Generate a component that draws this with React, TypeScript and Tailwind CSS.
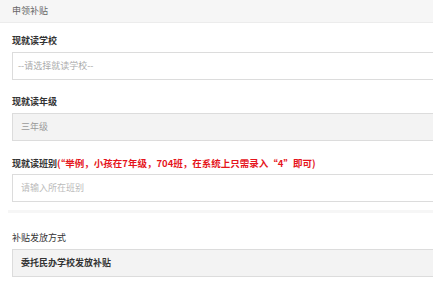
export default function App() {
  const font = { fontFamily: '"Noto Sans CJK SC", "Liberation Sans", sans-serif' };
  return (
    <div className="w-[433px] h-[288px] overflow-hidden bg-white text-[9px]" style={font}>
      {/* header */}
      <div className="h-[23px] bg-[#f6f6f6] border-b border-[#ececec] pl-3 flex items-center text-[#666] leading-none">
        <span className="-mt-[1px]">申领补贴</span>
      </div>

      <div className="pl-3 pt-[10px]">
        <div className="mb-[14px]">
          <div className="h-[16px] leading-[16px] mb-[3px] font-bold text-[#333]">现就读学校</div>
          <div className="h-[28px] w-[440px] border border-[#dcdcdc] bg-white pl-[5px] flex items-center text-[#aaa]">
            --请选择就读学校--
          </div>
        </div>

        <div className="mb-[14px]">
          <div className="h-[16px] leading-[16px] mb-[3px] font-bold text-[#333]">现就读年级</div>
          <div className="h-[28px] w-[440px] border border-[#dcdcdc] bg-[#f3f3f3] pl-[8px] flex items-center text-[#999]">
            三年级
          </div>
        </div>

        <div>
          <div className="h-[16px] leading-[16px] mb-[3px] font-bold text-[#333] whitespace-nowrap">
            现就读班别<span className="text-[#e5141b] text-[9.5px]">(“举例，小孩在7年级，704班，在系统上只需录入“4”即可)</span>
          </div>
          <div className="h-[28px] w-[440px] border border-[#dcdcdc] bg-white pl-[8px] flex items-center text-[#bbb]">
            请输入所在班别
          </div>
        </div>
      </div>

      <div className="pl-2 pt-[8px]">
        <div className="h-[3px] bg-[#f6f6f6]" />
      </div>

      <div className="pl-3 pt-[17px]">
        <div className="h-[16px] leading-[16px] mb-[3px] text-[#333]">补贴发放方式</div>
        <div className="h-[28px] w-[440px] border border-[#dcdcdc] bg-[#f3f3f3] pl-[8px] flex items-center font-bold text-[#333]">
          委托民办学校发放补贴
        </div>
      </div>
    </div>
  );
}
